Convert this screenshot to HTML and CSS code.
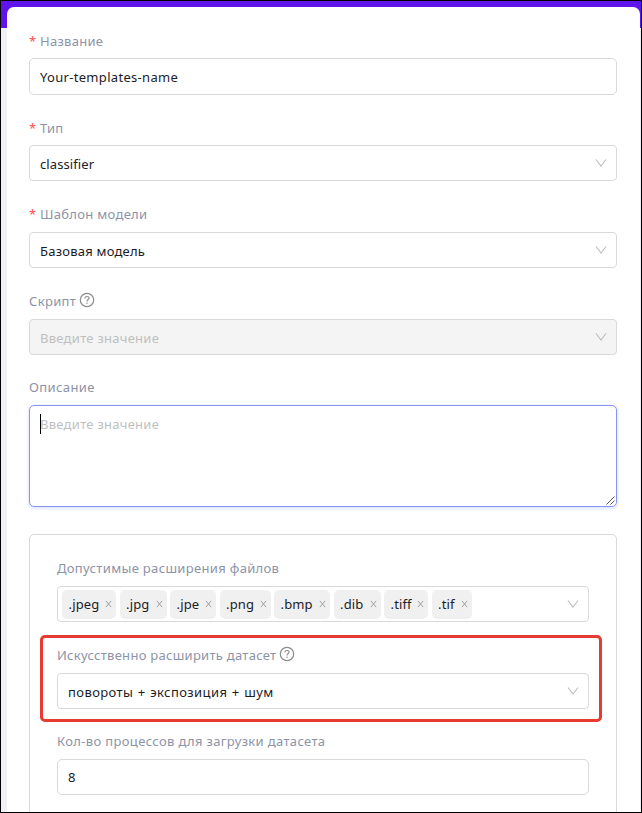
FILE: index.html
```
<!DOCTYPE html>
<html lang="ru">
<head>
<meta charset="utf-8">
<title>Шаблон</title>
<link rel="stylesheet" href="styles.css">
</head>
<body>
<svg class="defs" aria-hidden="true">
  <symbol id="down" viewBox="0 0 12 10"><path d="M1 1.500 6 8 11 1.500" fill="none" stroke="currentColor" stroke-width="1.2"/></symbol>
  <symbol id="help" viewBox="0 0 16 16"><circle cx="8" cy="8" r="6.7" fill="none" stroke="currentColor" stroke-width="1.2"/><path d="M5.9 6.5C5.9 5.2 6.8 4.5 8 4.5s2.1.7 2.1 1.8C10.100 7.600 8 7.600 8 9.400" fill="none" stroke="currentColor" stroke-width="1.1"/><circle cx="8" cy="11.200" r=".7" fill="currentColor"/></symbol>
  <symbol id="close" viewBox="0 0 8 8"><path d="M1 .5 7 7.500M7 .5 1 7.500" fill="none" stroke="currentColor" stroke-width="1.100"/></symbol>
</svg>
<div class="page">
  <main class="card">
    <div class="label low"><span class="req">*</span><span class="t-name">Название</span></div>
    <div class="box first"><span class="v-name">Your-templates-name</span></div>
    <div class="label low"><span class="req">*</span><span class="t-type">Тип</span></div>
    <div class="box select"><span class="v-type">classifier</span><svg class="down"><use href="#down"/></svg></div>
    <div class="label third"><span class="req">*</span><span class="t-model">Шаблон модели</span></div>
    <div class="box select"><span class="v-model">Базовая модель</span><svg class="down"><use href="#down"/></svg></div>
    <div class="label third"><span class="t-script">Скрипт</span><svg class="help"><use href="#help"/></svg></div>
    <div class="box select disabled"><span class="hint">Введите значение</span><svg class="down"><use href="#down"/></svg></div>
    <div class="label desc"><span class="t-desc">Описание</span></div>
    <div class="area"><i class="caret"></i><span class="hint">Введите значение</span><svg class="grip" viewBox="0 0 9 9"><path d="M.5 8.500 8.500.5M4.500 8.500l4-4" stroke="#555" fill="none"/></svg></div>
    <section class="panel">
      <div class="label"><span class="t-ext">Допустимые расширения файлов</span></div>
      <div class="box select tags">
        <span class="tag w54"><b>.jpeg</b><svg class="close"><use href="#close"/></svg></span>
        <span class="tag w47"><b>.jpg</b><svg class="close"><use href="#close"/></svg></span>
        <span class="tag w46"><b>.jpe</b><svg class="close"><use href="#close"/></svg></span>
        <span class="tag w51"><b>.png</b><svg class="close"><use href="#close"/></svg></span>
        <span class="tag w56"><b>.bmp</b><svg class="close"><use href="#close"/></svg></span>
        <span class="tag w47"><b>.dib</b><svg class="close"><use href="#close"/></svg></span>
        <span class="tag w44"><b>.tiff</b><svg class="close"><use href="#close"/></svg></span>
        <span class="tag w40"><b>.tif</b><svg class="close"><use href="#close"/></svg></span>
        <svg class="down"><use href="#down"/></svg>
      </div>
      <div class="marked">
        <div class="label"><span class="t-aug">Искусственно расширить датасет</span><svg class="help"><use href="#help"/></svg></div>
        <div class="box select"><span class="v-aug">повороты + экспозиция + шум</span><svg class="down"><use href="#down"/></svg></div>
      </div>
      <div class="label"><span class="t-proc">Кол-во процессов для загрузки датасета</span></div>
      <div class="box num"><span>8</span></div>
    </section>
  </main>
</div>
</body>
</html>
```
FILE: styles.css
```
* { box-sizing: border-box; }
body { margin: 0; font: 13px/20px "Noto Sans", "Open Sans", sans-serif; color: #1c1c1f; }
.defs { position: absolute; width: 0; height: 0; }
.page { width: 642px; height: 813px; overflow: hidden; border: 1px solid #000; padding: 6px 1px 0 6px; background: linear-gradient(#5f14ec 27px, #f0f0f6 27px); }
.card { height: 806px; padding: 21px 23px 0 22px; background: #fff; border-radius: 7px 7px 0 0; }
.label { display: flex; align-items: center; height: 24px; margin-bottom: 6px; color: #8d93a6; white-space: nowrap; }
.label.low { padding-top: 2px; }
.req { width: 11px; color: #ff4d4f; font-size: 13px; }
.help { width: 16px; height: 16px; margin-left: 3px; color: #8c8c8c; position: relative; top: -1px; }
.box { display: flex; align-items: center; height: 36px; padding: 2px 10px 0; border: 1px solid #d9d9d9; border-radius: 4px; background: #fff; white-space: nowrap; margin-bottom: 20px; }
.box.first { height: 37px; padding-top: 0; border-radius: 5px; }
.label.third { margin-top: 21px; }
.label.desc { margin-top: 20px; }
.down { width: 12px; height: 10px; margin-left: auto; margin-top: -2px; margin-right: -1px; color: #bfbfbf; }
.disabled { background: #f4f4f4; }
.hint { color: #bfbfbf; letter-spacing: .27px; }
.area { display: flex; position: relative; height: 102px; padding: 8px 10px; border: 1px solid #8795f2; border-radius: 5px; box-shadow: 0 1px 3px 1px #e4e7fd; }
.caret { position: absolute; left: 10px; top: 8px; width: 1px; height: 20px; background: #000; }
.grip { position: absolute; right: 1px; bottom: 1px; width: 9px; height: 9px; }
.panel { height: 300px; margin-top: 27px; padding: 21px 27px 0; border: 1px solid #d9d9d9; border-radius: 5px; }
.panel .box { margin-bottom: 0; }
.panel .tags { gap: 3.500px; padding: 0 10px 0 4px; }
.panel .tags .down { margin-top: 0; }
.tag { display: flex; align-items: center; justify-content: space-between; height: 29px; padding: 0 4px 0 6.500px; border-radius: 5px; background: #f0f0f0; }
.tag b { font-weight: 400; letter-spacing: .15px; }
.close { width: 7px; height: 8px; color: #999; }
.w40 { width: 40px; } .w44 { width: 44px; } .w46 { width: 46px; } .w47 { width: 47px; }
.w51 { width: 51px; } .w54 { width: 54px; } .w56 { width: 56px; }
.marked { width: 562px; height: 87px; margin: 13px -17px 7px; padding: 5px 10px 0 14px; border: 3px solid #e63b31; border-radius: 5px; }
.box.num { padding-top: 0; border-radius: 5px; }
.t-name { letter-spacing: .27px; }
.t-type { letter-spacing: .2px; }
.t-model { letter-spacing: .3px; }
.t-script { letter-spacing: .35px; }
.t-desc { letter-spacing: .4px; }
.t-ext { letter-spacing: .33px; }
.t-aug { letter-spacing: .28px; }
.t-proc { letter-spacing: .35px; }
.v-name { letter-spacing: .31px; }
.v-type { letter-spacing: .1px; }
.v-model { letter-spacing: .22px; }
.v-aug { letter-spacing: .4px; word-spacing: .8px; }
```
